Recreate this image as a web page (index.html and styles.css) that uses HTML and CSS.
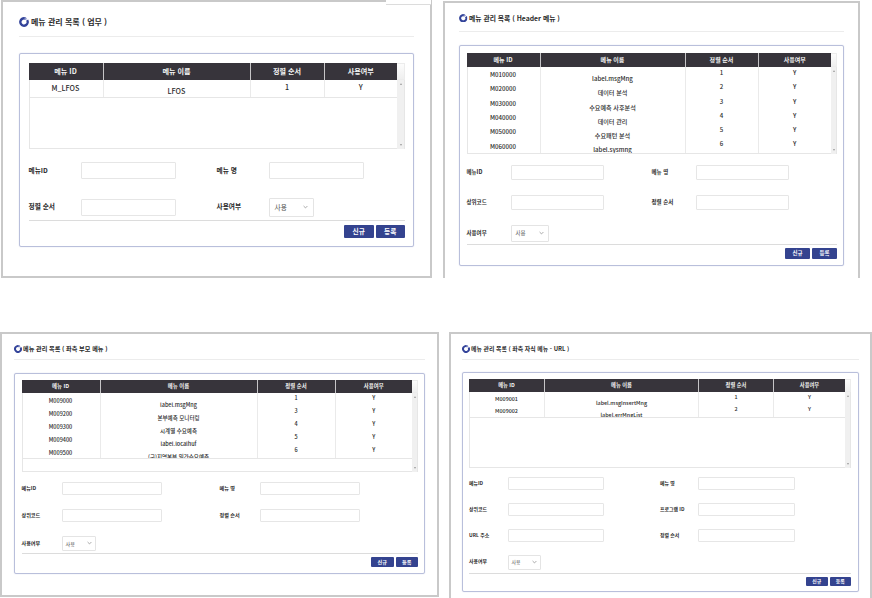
FILE: index.html
```
<!DOCTYPE html>
<html lang="ko">
<head>
<meta charset="utf-8">
<title>메뉴 관리 목록</title>
<link rel="stylesheet" href="styles.css">
</head>
<body>
<svg class="defs" width="0" height="0">
  <symbol id="ring" viewBox="0 0 12 12">
    <circle cx="6" cy="6" r="4.4" fill="none" stroke="#33439a" stroke-width="2.9" stroke-dasharray="24.6 3.1" transform="rotate(-32 6 6)"/>
    <path d="M6.6 1.6A4.4 4.4 0 0 1 9 2.8" fill="none" stroke="#8c96cb" stroke-width="2.2"/>
  </symbol>
  <symbol id="chev" viewBox="0 0 6 4">
    <path d="M.7.8 3 3.1 5.3.8" fill="none" stroke="#8d8d8d" stroke-width=".9"/>
  </symbol>
</svg>
<main class="board">

<section class="panel work">
  <i class="notch"></i>
  <h2 class="title"><svg class="ring"><use href="#ring"/></svg>메뉴 관리 목록 ( 업무 )</h2>
  <div class="box">
    <div class="table">
      <div class="head"><span>메뉴 ID</span><span>메뉴 이름</span><span>정렬 순서</span><span>사용여부</span></div>
      <div class="corner"></div>
      <div class="body">
        <div class="rows">
          <div class="row"><span class="id">M_LFOS</span><span class="name">LFOS</span><span>1</span><span>Y</span></div>
        </div>
      </div>
      <div class="scroll"></div>
    </div>
    <div class="form">
      <div class="line"><label>메뉴ID</label><input><label>메뉴 명</label><input></div>
      <div class="line"><label>정렬 순서</label><input><label>사용여부</label><div class="select">사용<svg><use href="#chev"/></svg></div></div>
    </div>
    <div class="actions"><button>신규</button><button>등록</button></div>
  </div>
</section>

<section class="panel header-menu">
  <h2 class="title"><svg class="ring"><use href="#ring"/></svg>메뉴 관리 목록 ( Header 메뉴 )</h2>
  <div class="box">
    <div class="table">
      <div class="head"><span>메뉴 ID</span><span>메뉴 이름</span><span>정렬 순서</span><span>사용여부</span></div>
      <div class="corner"></div>
      <div class="body">
        <div class="rows">
          <div class="row"><span class="id">M010000</span><span class="name">label.msgMng</span><span>1</span><span>Y</span></div>
          <div class="row"><span class="id">M020000</span><span class="name">데이터 분석</span><span>2</span><span>Y</span></div>
          <div class="row"><span class="id">M030000</span><span class="name">수요예측 사후분석</span><span>3</span><span>Y</span></div>
          <div class="row"><span class="id">M040000</span><span class="name">데이터 관리</span><span>4</span><span>Y</span></div>
          <div class="row"><span class="id">M050000</span><span class="name">수요패턴 분석</span><span>5</span><span>Y</span></div>
          <div class="row"><span class="id">M060000</span><span class="name">label.sysmng</span><span>6</span><span>Y</span></div>
        </div>
      </div>
      <div class="scroll"></div>
    </div>
    <div class="form">
      <div class="line"><label>메뉴ID</label><input><label>메뉴 명</label><input></div>
      <div class="line"><label>상위코드</label><input><label>정렬 순서</label><input></div>
      <div class="line"><label>사용여부</label><div class="select">사용<svg><use href="#chev"/></svg></div></div>
    </div>
    <div class="actions"><button>신규</button><button>등록</button></div>
  </div>
</section>

<section class="panel parent-menu">
  <h2 class="title"><svg class="ring"><use href="#ring"/></svg>메뉴 관리 목록 ( 좌측 부모 메뉴 )</h2>
  <div class="box">
    <div class="table">
      <div class="head"><span>메뉴 ID</span><span>메뉴 이름</span><span>정렬 순서</span><span>사용여부</span></div>
      <div class="corner"></div>
      <div class="body">
        <div class="rows">
          <div class="row"><span class="id">M009000</span><span class="name">label.msgMng</span><span>1</span><span>Y</span></div>
          <div class="row"><span class="id">M009200</span><span class="name">본부예측 모니터링</span><span>3</span><span>Y</span></div>
          <div class="row"><span class="id">M009300</span><span class="name">시계열 수요예측</span><span>4</span><span>Y</span></div>
          <div class="row"><span class="id">M009400</span><span class="name">label.localhuf</span><span>5</span><span>Y</span></div>
          <div class="row"><span class="id">M009500</span><span class="name">(구)지역본부 일간수요예측</span><span>6</span><span>Y</span></div>
        </div>
      </div>
      <div class="scroll"></div>
    </div>
    <div class="form">
      <div class="line"><label>메뉴ID</label><input><label>메뉴 명</label><input></div>
      <div class="line"><label>상위코드</label><input><label>정렬 순서</label><input></div>
      <div class="line"><label>사용여부</label><div class="select">사용<svg><use href="#chev"/></svg></div></div>
    </div>
    <div class="actions"><button>신규</button><button>등록</button></div>
  </div>
</section>

<section class="panel child-menu">
  <h2 class="title"><svg class="ring"><use href="#ring"/></svg>메뉴 관리 목록 ( 좌측 자식 메뉴 - URL )</h2>
  <div class="box">
    <div class="table">
      <div class="head"><span>메뉴 ID</span><span>메뉴 이름</span><span>정렬 순서</span><span>사용여부</span></div>
      <div class="corner"></div>
      <div class="body">
        <div class="rows">
          <div class="row"><span class="id">M009001</span><span class="name">label.msgInsertMng</span><span>1</span><span>Y</span></div>
          <div class="row"><span class="id">M009002</span><span class="name">label.errMngList</span><span>2</span><span>Y</span></div>
        </div>
      </div>
      <div class="scroll"></div>
    </div>
    <div class="form">
      <div class="line"><label>메뉴ID</label><input><label>메뉴 명</label><input></div>
      <div class="line"><label>상위코드</label><input><label>프로그램 ID</label><input></div>
      <div class="line"><label>URL 주소</label><input><label>정렬 순서</label><input></div>
      <div class="line"><label>사용여부</label><div class="select">사용<svg><use href="#chev"/></svg></div></div>
    </div>
    <div class="actions"><button>신규</button><button>등록</button></div>
  </div>
</section>

</main>
</body>
</html>
```
FILE: styles.css
```
* { box-sizing: border-box; }

body {
  margin: 0;
  width: 872px;
  height: 598px;
  overflow: hidden;
  background: #fff;
  color: #2b2b2b;
  font-family: "Noto Sans CJK KR", "Noto Sans", sans-serif;
}

.defs { position: absolute; }

.board {
  display: grid;
  grid-template-columns: 443px 429px;
  grid-template-rows: 332px 266px;
  align-items: start;
}

.panel {
  position: relative;
  border: 2px solid #c9c9c9;
  background: #fff;
}

.notch {
  position: absolute;
  top: -2px;
  right: -1px;
  width: 45px;
  height: 5px;
  background: #fff;
  border-bottom: 1px solid #dcdcdc;
}

.title {
  display: flex;
  align-items: center;
  margin: 0;
  height: var(--title-h);
  border-bottom: 1px solid #ececec;
  font-size: var(--title-fs);
  font-weight: 700;
  line-height: 1;
  white-space: pre;
}

.ring {
  width: var(--ring);
  height: var(--ring);
  margin-right: var(--ring-gap);
}

.box {
  border: 1px solid #b9bfdb;
  border-radius: 2px;
  box-shadow: 0 0 1px #b9c1de;
  height: var(--box-h);
  margin-top: var(--box-mt);
  padding: var(--box-pad);
}

.table {
  display: grid;
  grid-template-columns: 1fr var(--bar);
  grid-template-rows: var(--head-h) var(--body-h);
}

.head,
.row {
  display: grid;
  grid-template-columns: var(--cols);
}

.head {
  background: #37343b;
  color: #f4f4f4;
  font-size: var(--head-fs);
  font-weight: 700;
  line-height: var(--head-h);
  text-align: center;
}

.head span + span { border-left: 1px solid #c6c5c7; }

.corner {
  background: linear-gradient(#fcfcfc, #efefef);
  border: 1px solid #ececec;
  border-width: 1px 1px 1px 0;
}

.body {
  border: 1px solid #e6e6e6;
  border-width: 0 0 1px 1px;
}

.rows {
  margin-left: -1px;
  height: var(--rows-h);
  overflow: hidden;
  border-bottom: 1px solid #e6e6e6;
}

.row { height: var(--pitch); }

.row span {
  height: var(--pitch);
  font-size: var(--row-fs);
  font-weight: 500;
  line-height: calc(var(--pitch) - 2.2px);
  text-align: center;
  white-space: nowrap;
}

.row span + span { border-left: 1px solid #eaeaea; }

.row .id { padding-top: var(--id-y); line-height: var(--pitch); }
.row .name { padding-top: var(--name-y); line-height: var(--pitch); }

.scroll {
  display: flex;
  flex-direction: column;
  justify-content: space-between;
  align-items: center;
  padding: 3px 0;
  background: #f0f0f0;
  border-right: 1px solid #e6e6e6;
}

.scroll::before,
.scroll::after {
  content: "";
  border: 1.5px solid transparent;
  border-width: 2px 1.5px;
}

.scroll::before { border-top: 0; border-bottom-color: #9a9a9a; }
.scroll::after { border-bottom: 0; border-top-color: #9a9a9a; }

.form {
  display: flex;
  flex-direction: column;
  gap: var(--line-gap);
  height: var(--form-h);
  padding-top: var(--form-pt);
  border-bottom: 1px solid #dcdcdc;
}

.line {
  display: grid;
  grid-template-columns: var(--fields);
  align-items: center;
  height: var(--input-h);
}

label {
  font-size: var(--label-fs);
  font-weight: 700;
  line-height: 1;
  white-space: nowrap;
  margin-top: var(--label-mt, -2px);
}

input {
  width: var(--input-w);
  height: var(--input-h);
  padding: 0;
  border: 1px solid #e6e6e6;
  border-radius: 1px;
  background: #fff;
}

.select {
  display: flex;
  align-items: center;
  justify-content: space-between;
  width: var(--select-w);
  height: calc(var(--input-h) + 1.5px);
  padding: 0 var(--select-px);
  border: 1px solid #e4e4e4;
  border-radius: 1px;
  color: #555;
  font-size: var(--label-fs);
  line-height: 1;
}

.select svg { width: 5px; height: 4px; }

.actions {
  display: flex;
  justify-content: flex-end;
  gap: 2px;
  padding-top: var(--act-pt);
}

button {
  width: var(--btn-w);
  height: var(--btn-h);
  padding: 0;
  border: 0;
  border-radius: 1px;
  background: #34438f;
  color: #fff;
  font: 700 var(--label-fs)/1 "Noto Sans CJK KR", sans-serif;
}

.work {
  width: 431px;
  height: 278px;
  margin-left: 1px;
  padding: 0 16px;
  --title-fs: 8px; --title-h: 35px;
  --ring: 10px; --ring-gap: 2px;
  --box-mt: 16px; --box-h: 194px; --box-pad: 9px 8px 0 8.5px;
  --bar: 8px; --head-h: 17px; --body-h: 69px;
  --cols: 74px 147px 74px 1fr;
  --head-fs: 7.1px; --row-fs: 7.2px;
  --pitch: 17.5px; --rows-h: 18px; --id-y: .3px; --name-y: 3.3px;
  --form-pt: 13px; --form-h: 72px; --line-gap: 19px;
  --fields: 52.5px 135.5px 52px 1fr;
  --label-fs: 6.7px; --input-w: 95px; --input-h: 17px;
  --select-w: 45px; --select-px: 5px; --label-mt: -1px;
  --act-pt: 4px; --btn-w: 29.5px; --btn-h: 13px;
}

.work .title { padding-top: 5px; }

.header-menu {
  width: 417px;
  height: 277px;
  margin-top: 1px;
  padding: 0 14px;
  border-bottom: 0;
  --title-fs: 6.8px; --title-h: 29px;
  --ring: 8.5px; --ring-gap: 1.5px;
  --box-mt: 13px; --box-h: 221px; --box-pad: 7px 6px 0 6.5px;
  --bar: 6px; --head-h: 14px; --body-h: 87px;
  --cols: 73px 145px 73px 1fr;
  --head-fs: 6px; --row-fs: 6.1px;
  --pitch: 14.3px; --rows-h: 87px; --id-y: 1.2px; --name-y: 5px;
  --form-pt: 11px; --form-h: 91px; --line-gap: 15px;
  --fields: 44px 141px 44px 1fr;
  --label-fs: 5.5px; --input-w: 93px; --input-h: 15px;
  --select-w: 38px; --select-px: 4px; --label-mt: 0;
  --act-pt: 3px; --btn-w: 25px; --btn-h: 11px;
}

.header-menu .title { padding-top: 2px; }

.parent-menu {
  width: 439px;
  height: 265px;
  padding: 0 12px;
  --title-fs: 6.15px; --title-h: 26px;
  --ring: 8px; --ring-gap: 1px;
  --box-mt: 13px; --box-h: 201px; --box-pad: 6px 6px 0 6.5px;
  --bar: 6px; --head-h: 13px; --body-h: 79px;
  --cols: 78px 157px 78px 1fr;
  --head-fs: 5.4px; --row-fs: 5.5px;
  --pitch: 12.95px; --rows-h: 66px; --id-y: 2px; --name-y: 6px;
  --form-pt: 10px; --form-h: 82px; --line-gap: 14px;
  --fields: 40px 158px 40px 1fr;
  --label-fs: 5.1px; --input-w: 100px; --input-h: 13px;
  --select-w: 34px; --select-px: 3px; --label-mt: -1px;
  --act-pt: 3px; --btn-w: 22.5px; --btn-h: 10px;
}

.parent-menu .title,
.child-menu .title { padding-top: 5px; }

.child-menu {
  width: 423px;
  height: 266px;
  margin-left: 6px;
  padding: 0 11px;
  border-bottom: 0;
  --title-fs: 5.9px; --title-h: 26px;
  --ring: 8px; --ring-gap: 1px;
  --box-mt: 12px; --box-h: 220px; --box-pad: 6px 7px 0 6px;
  --bar: 6px; --head-h: 12.5px; --body-h: 76px;
  --cols: 75px 154px 75px 1fr;
  --head-fs: 5.25px; --row-fs: 5.4px;
  --pitch: 12.6px; --rows-h: 26px; --id-y: 1.4px; --name-y: 5.4px;
  --form-pt: 9.5px; --form-h: 106px; --line-gap: 13px;
  --fields: 38.5px 152.5px 38px 1fr;
  --label-fs: 4.9px; --input-w: 96.5px; --input-h: 13px;
  --select-w: 33px; --select-px: 3px; --label-mt: -1px;
  --act-pt: 3px; --btn-w: 21.5px; --btn-h: 9.5px;
}
```
